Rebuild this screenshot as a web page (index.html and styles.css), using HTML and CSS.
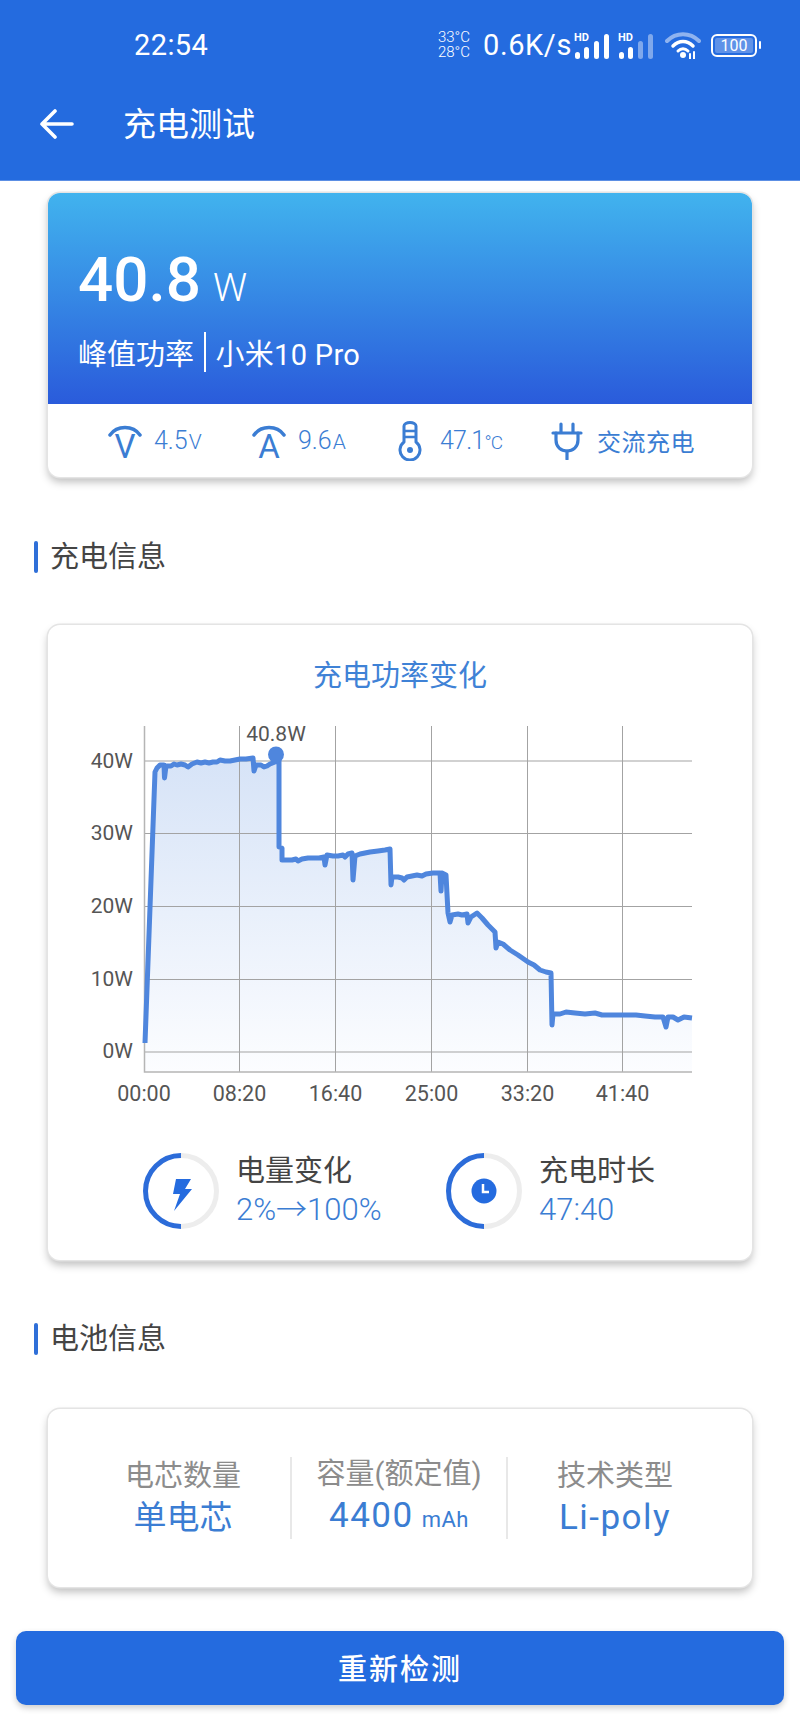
FILE: index.html
```html
<!DOCTYPE html>
<html lang="zh-CN">
<head>
  <meta charset="UTF-8">
  <title>充电测试</title>
  <link rel="stylesheet" href="styles.css">
</head>
<body>
  <header class="appbar">
    <div class="statusbar">
      <span class="clock">22:54</span>
      <div class="status-right">
        <div class="temps"><span>33°C</span><span>28°C</span></div>
        <span class="speed">0.6K/s</span>
        <svg class="signal" width="38" height="30" viewBox="0 0 38 30">
          <text x="0" y="11" class="hd">HD</text>
          <rect x="1" y="22" width="5" height="7" rx="2.5" fill="#fff"/>
          <rect x="10" y="17" width="5" height="12" rx="2.5" fill="#fff"/>
          <rect x="20" y="11" width="5" height="18" rx="2.5" fill="#fff"/>
          <rect x="30" y="4" width="5" height="25" rx="2.5" fill="#fff"/>
        </svg>
        <svg class="signal" width="38" height="30" viewBox="0 0 38 30">
          <text x="0" y="11" class="hd">HD</text>
          <rect x="1" y="22" width="5" height="7" rx="2.5" fill="#fff"/>
          <rect x="10" y="17" width="5" height="12" rx="2.5" fill="#fff"/>
          <rect x="20" y="11" width="5" height="18" rx="2.5" fill="#7fa8ec"/>
          <rect x="30" y="4" width="5" height="25" rx="2.5" fill="#7fa8ec"/>
        </svg>
        <svg class="wifi" width="36" height="28" viewBox="0 0 36 28" fill="none" stroke-linecap="round">
          <path d="M2 10C11 1 25 1 34 10" stroke="#8fb3ef" stroke-width="4"/>
          <path d="M8 15C14 9 22 9 28 15" stroke="#fff" stroke-width="3.5"/>
          <path d="M13 20C16 17 20 17 23 20" stroke="#fff" stroke-width="3"/>
          <circle cx="18" cy="24" r="3" fill="#fff"/>
          <path d="M25 23V28M29 21V28" stroke="#fff" stroke-width="2"/>
        </svg>
        <div class="battery">
          <div class="battery-body"><span>100</span></div>
          <div class="battery-tip"></div>
        </div>
      </div>
    </div>
    <div class="toolbar">
      <svg class="back" width="34" height="30" viewBox="0 0 34 30" fill="none" stroke="#fff" stroke-width="3.6" stroke-linecap="round" stroke-linejoin="round">
        <path d="M15 2L2 15L15 28M2 15H32"/>
      </svg>
      <h1 class="page-title">充电测试</h1>
    </div>
  </header>

  <main class="content">
    <section class="card hero">
      <div class="hero-top">
        <div class="power"><span class="power-num">40.8</span><span class="power-unit">W</span></div>
        <div class="hero-sub"><span>峰值功率</span><i class="hero-sep"></i><span class="hero-model">小米10 Pro</span></div>
      </div>
      <div class="hero-stats">
        <div class="stat">
          <svg class="stat-letter" width="34" height="46" viewBox="0 0 34 46" fill="none">
            <path d="M2 13C9 3 25 3 32 13" stroke="#3b7dd3" stroke-width="3.500" stroke-linecap="round"/>
            <text x="17" y="36" class="icon-letter">V</text>
          </svg>
          <span class="stat-text">4.5<small>V</small></span>
        </div>
        <div class="stat">
          <svg class="stat-letter" width="34" height="46" viewBox="0 0 34 46" fill="none">
            <path d="M2 13C9 3 25 3 32 13" stroke="#3b7dd3" stroke-width="3.500" stroke-linecap="round"/>
            <text x="17" y="36" class="icon-letter">A</text>
          </svg>
          <span class="stat-text">9.6<small>A</small></span>
        </div>
        <div class="stat">
          <svg width="24" height="40" viewBox="0 0 24 40" fill="none" stroke="#3b7dd3" stroke-width="3">
            <path d="M6 5a6 3.500 0 0 1 12 0V21a10 10 0 1 1-12 0Z" stroke-linejoin="round"/>
            <path d="M7 10H17M7 16H17" stroke-width="2.500"/>
            <circle cx="12" cy="29" r="3" fill="#3b7dd3" stroke="none"/>
          </svg>
          <span class="stat-text stat-temp">47.1<small>°C</small></span>
        </div>
        <div class="stat">
          <svg width="32" height="38" viewBox="0 0 32 38" fill="none" stroke="#3b7dd3" stroke-width="3.200" stroke-linecap="round" stroke-linejoin="round">
            <path d="M10 2V11M22 2V11M2 11H30"/>
            <path d="M5 11V18C5 25 10 29 16 29C22 29 27 25 27 18V11"/>
            <path d="M16 29V37"/>
          </svg>
          <span class="stat-text stat-cn">交流充电</span>
        </div>
      </div>
    </section>

    <h2 class="section-title first">充电信息</h2>

    <section class="card chart-card">
      <h3 class="chart-title">充电功率变化</h3>
      <svg class="chart" width="620" height="400" viewBox="84 716 620 400">
        <defs>
          <linearGradient id="areaFill" x1="0" y1="0" x2="0" y2="1">
            <stop offset="0" stop-color="#d6e3f7"/>
            <stop offset="1" stop-color="#fcfdff"/>
          </linearGradient>
        </defs>
        <polygon class="area" fill="url(#areaFill)" points="145,1072 145,1043 155,772 160,765 166,766 177,764 188,766 197,762 213,762 220,760 230,761 240,759 253,758 257,765 267,767 275,762 279,755 279,847 282,848 282,860 297,859 313,857 325,857 343,854 352,853 370,852 390,849 392,877 405,878 417,875 433,873 443,873 447,876 448,913 452,915 467,914 477,913 495,932 498,942 528,962 540,970 551,973 552,1014 567,1013 600,1014 633,1015 663,1017 678,1019 692,1017 692,1072"/>
        <g class="grid">
          <path d="M144 761H692M144 833.500H692M144 906.500H692M144 979.500H692M144 1052H692"/>
          <path d="M239.500 726V1072M335.500 726V1072M431.500 726V1072M527.500 726V1072M622.500 726V1072"/>
        </g>
        <path class="axis" d="M144.500 726V1072H692"/>
        <polyline class="line" points="145,1043 155,772 157,768 160,765 164,765 164.500,778 166,766 171,766 174,764 177,765 181,764 185,765 188,767 192,764 197,762 201,763 205,762 209,763 213,762 217,762 220,760 225,761 230,761 235,760 240,759 246,759 253,758 254,771 256,765 261,765 264,767 267,766 270,764 275,762 279,755 279,847 282,848 282,860 288,860 292,860 296,859 298,861 302,859 308,858 313,858 319,858 324,857 325,865 327,855 333,856 338,856 343,855 345,857 348,854 352,853 353,880 355,856 360,854 365,853 370,852 378,851 385,850 390,849 391,885 392,877 398,877 402,878 404,880 407,877 412,876 417,875 422,876 426,874 433,873 440,873 441,891 442,873 446,875 448,913 450,922 452,915 458,914 462,915 467,914 468,923 471,917 474,915 477,913 482,918 488,925 495,932 496,948 498,942 503,944 510,950 518,955 528,962 534,965 540,970 546,972 551,973 552,1025 553,1014 560,1014 566,1012 575,1013 585,1014 595,1013 602,1015 612,1015 625,1015 636,1015 645,1016 655,1017 663,1017 666,1027 668,1017 673,1017 678,1020 684,1017 692,1018"/>
        <circle cx="276" cy="754.500" r="8" class="peak"/>
        <text x="276" y="741" class="peak-label">40.8W</text>
        <g class="y-labels">
          <text x="133" y="768">40W</text>
          <text x="133" y="840">30W</text>
          <text x="133" y="913">20W</text>
          <text x="133" y="986">10W</text>
          <text x="133" y="1058">0W</text>
        </g>
        <g class="x-labels">
          <text x="144" y="1101">00:00</text>
          <text x="239.500" y="1101">08:20</text>
          <text x="335.500" y="1101">16:40</text>
          <text x="431.500" y="1101">25:00</text>
          <text x="527.500" y="1101">33:20</text>
          <text x="622.500" y="1101">41:40</text>
        </g>
      </svg>
      <div class="summary">
        <div class="summary-item">
          <svg width="76" height="76" viewBox="0 0 76 76" fill="none">
            <path d="M38 2.500A35.500 35.500 0 0 1 38 73.500" stroke="#ededed" stroke-width="5"/>
            <path d="M38 73.500A35.500 35.500 0 0 1 38 2.500" stroke="#2c6cd9" stroke-width="5"/>
            <path d="M33 26H48L42 36H49L31 58L37 41H30Z" fill="#246bdf"/>
          </svg>
          <div class="summary-text"><span class="summary-label">电量变化</span><span class="summary-value">2%→100%</span></div>
        </div>
        <div class="summary-item">
          <svg width="76" height="76" viewBox="0 0 76 76" fill="none">
            <path d="M38 2.500A35.500 35.500 0 0 1 38 73.500" stroke="#ededed" stroke-width="5"/>
            <path d="M38 73.500A35.500 35.500 0 0 1 38 2.500" stroke="#2c6cd9" stroke-width="5"/>
            <circle cx="38" cy="38" r="12.500" fill="#246bdf"/>
            <path d="M37 31V39H43" stroke="#fff" stroke-width="2.500"/>
          </svg>
          <div class="summary-text"><span class="summary-label">充电时长</span><span class="summary-value">47:40</span></div>
        </div>
      </div>
    </section>

    <h2 class="section-title second">电池信息</h2>

    <section class="card battery-card">
      <div class="info-col">
        <span class="info-label">电芯数量</span>
        <span class="info-value cn">单电芯</span>
      </div>
      <div class="info-col">
        <span class="info-label">容量(额定值)</span>
        <span class="info-value">4400<small>mAh</small></span>
      </div>
      <div class="info-col">
        <span class="info-label">技术类型</span>
        <span class="info-value">Li-poly</span>
      </div>
    </section>
  </main>

  <button class="retest">重新检测</button>
</body>
</html>
```

FILE: styles.css
```css
* {
  box-sizing: border-box;
}

body {
  margin: 0;
  width: 800px;
  height: 1733px;
  overflow: hidden;
  background-color: #fff;
  font-family: Roboto, "Noto Sans CJK SC", sans-serif;
  color: #444;
}

.appbar {
  height: 181px;
  background-color: #246bdf;
  color: #fff;
  border-bottom: 1px solid #5c8fe4;
}

.statusbar {
  height: 90px;
  display: flex;
  align-items: center;
  justify-content: space-between;
  padding: 0 39px 0 134px;
}

.clock {
  font-size: 29px;
  letter-spacing: 0.4px;
}

.status-right {
  display: flex;
  align-items: center;
}

.temps {
  display: flex;
  flex-direction: column;
  font-size: 15px;
  font-weight: 300;
  line-height: 15px;
  margin-right: 13px;
}

.speed {
  font-size: 29px;
  letter-spacing: 0.6px;
  margin-right: 2px;
}

.signal {
  margin-right: 6px;
}

.hd {
  font-size: 11px;
  font-weight: 700;
  fill: #fff;
}

.wifi {
  margin: 0 10px 0 3px;
}

.battery {
  display: flex;
  align-items: center;
}

.battery-body {
  width: 46px;
  height: 23px;
  border: 2px solid #fff;
  border-radius: 6px;
  padding: 2px;
  display: flex;
}

.battery-body span {
  flex: 1;
  background-color: #5f92e8;
  border-radius: 2px;
  font-size: 16px;
  line-height: 15px;
  text-align: center;
}

.battery-tip {
  width: 2px;
  height: 8px;
  margin-left: 2px;
  background-color: #fff;
  border-radius: 1px;
}

.toolbar {
  display: flex;
  align-items: center;
  height: 68px;
  padding-left: 40px;
}

.page-title {
  margin: -5px 0 0 49px;
  font-size: 33px;
  font-weight: 400;
}

.content {
  padding: 12px 48px 0;
}

.card {
  border-radius: 12px;
  background-color: #fff;
  box-shadow: 0 0 0 1.5px #e4e4e4, 0 5px 8px rgba(0, 0, 0, 0.26);
}

.hero {
  height: 284px;
  overflow: hidden;
}

.hero-top {
  height: 211px;
  padding: 48px 0 0 30px;
  color: #fff;
  background: linear-gradient(#41b3ee, #2a5bdb);
}

.power {
  display: flex;
  align-items: baseline;
  height: 78px;
  line-height: 78px;
}

.power-num {
  font-size: 62px;
  font-weight: 500;
}

.power-unit {
  font-size: 38px;
  font-weight: 300;
  margin-left: 12px;
}

.hero-sub {
  display: flex;
  align-items: center;
  margin-top: 13px;
  font-size: 29px;
  height: 40px;
}

.hero-sep {
  width: 1.500px;
  height: 40px;
  margin: 0 10px;
  background-color: #fff;
}

.hero-model {
  letter-spacing: 0.3px;
}

.hero-stats {
  height: 73px;
  display: flex;
  align-items: center;
  padding-left: 60px;
}

.stat {
  display: flex;
  align-items: center;
  color: #3b7dd3;
}

.stat:nth-child(1) {
  width: 144px;
}

.stat:nth-child(2) {
  width: 146px;
}

.stat:nth-child(3) {
  width: 153px;
}

.stat-letter {
  margin-bottom: -8px;
}

.stat-text {
  font-size: 25px;
  font-weight: 300;
  margin-left: 12px;
}

.stat-text small {
  font-size: 21px;
  margin-left: 1px;
}

.stat-temp {
  margin-left: 18px;
  letter-spacing: -0.8px;
}

.stat-temp small {
  font-size: 19px;
  margin-left: 0;
}

.stat-cn {
  font-weight: 400;
  margin-left: 14px;
  font-size: 24px;
  letter-spacing: 0.5px;
}

.icon-letter {
  font-size: 33px;
  font-weight: 400;
  text-anchor: middle;
  fill: #3b7dd3;
}

.section-title {
  margin: 0;
  height: 32px;
  line-height: 32px;
  font-size: 29px;
  font-weight: 400;
  color: #444;
  position: relative;
  padding-left: 2px;
}

.section-title::before {
  content: "";
  position: absolute;
  left: -14px;
  top: 0;
  width: 4px;
  height: 32px;
  background-color: #2f6fd8;
  border-radius: 2px;
}

.section-title.first {
  margin-top: 64px;
}

.section-title.second {
  margin-top: 63px;
}

.chart-card {
  margin-top: 52px;
  height: 635px;
  padding-top: 31px;
}

.chart-title {
  margin: 0;
  height: 40px;
  line-height: 40px;
  font-size: 29px;
  font-weight: 400;
  text-align: center;
  color: #3f82d6;
}

.chart {
  display: block;
  margin: 20px 0 0 36px;
}

.grid path {
  fill: none;
  stroke: #a3a3a3;
  stroke-width: 1;
}

.axis {
  fill: none;
  stroke: #b5b5b5;
  stroke-width: 1.500;
}

.line {
  fill: none;
  stroke: #4f86dd;
  stroke-width: 5;
  stroke-linejoin: round;
}

.peak {
  fill: #4f86dd;
}

.peak-label {
  font-size: 21px;
  text-anchor: middle;
  fill: #555;
}

.y-labels text {
  font-size: 21px;
  text-anchor: end;
  fill: #555;
}

.x-labels text {
  font-size: 21.500px;
  text-anchor: middle;
  fill: #555;
}

.summary {
  display: flex;
  margin-top: 36px;
  padding-left: 95px;
}

.summary-item {
  display: flex;
  align-items: center;
  width: 303px;
}

.summary-text {
  display: flex;
  flex-direction: column;
  margin-left: 17px;
}

.summary-label {
  font-size: 29px;
  line-height: 38px;
  color: #444;
}

.summary-value {
  font-size: 31px;
  line-height: 40px;
  font-weight: 300;
  color: #3b7dd3;
}

.battery-card {
  margin-top: 54px;
  height: 178px;
  display: flex;
  align-items: center;
  padding: 0 30px 0 28px;
}

.info-col {
  flex: 1;
  height: 82px;
  display: flex;
  flex-direction: column;
  align-items: center;
  justify-content: center;
  border-left: 2px solid #e8e8e8;
}

.info-col:first-child {
  border-left: none;
}

.info-label {
  font-size: 29px;
  line-height: 40px;
  color: #8c8c8c;
}

.info-value {
  font-size: 35px;
  line-height: 44px;
  letter-spacing: 1.5px;
  color: #3b7dd3;
}

.info-value.cn {
  font-size: 33px;
  letter-spacing: 0;
}

.info-value small {
  font-size: 22px;
  margin-left: 8px;
  letter-spacing: 0.5px;
}

.retest {
  display: block;
  margin: 44px 16px 0;
  width: 768px;
  height: 74px;
  padding-bottom: 3px;
  border: none;
  border-radius: 10px;
  background-color: #246bdf;
  color: #fff;
  font-family: inherit;
  font-size: 29px;
  font-weight: 500;
  letter-spacing: 2px;
  box-shadow: 0 3px 6px rgba(0, 0, 0, 0.2);
}
```
